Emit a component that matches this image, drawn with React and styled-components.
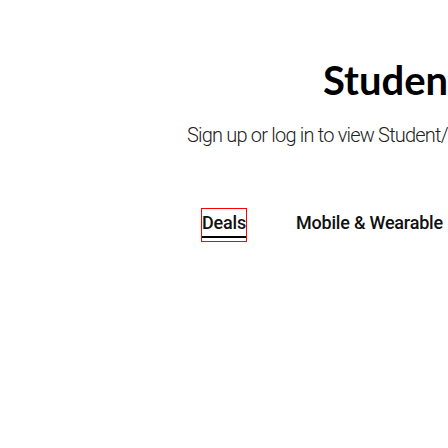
import React from "react";
import styled, { createGlobalStyle } from "styled-components";

const Global = createGlobalStyle`
  html, body { margin: 0; padding: 0; background: #fff; }
  body { overflow: hidden; width: 448px; height: 448px; }
`;

const Page = styled.main`
  width: 448px;
  height: 448px;
  overflow: hidden;
  display: flex;
  flex-direction: column;
  padding-top: 56px;
  box-sizing: border-box;
`;

const Row = styled.div`
  padding-left: ${(p) => p.$indent}px;
  white-space: nowrap;
`;

const Title = styled.h1`
  margin: 0;
  font-family: "Lato", "Liberation Sans", sans-serif;
  font-weight: 700;
  font-size: 40px;
  line-height: 48px;
  color: #000;
  letter-spacing: 0;
`;

const Subtitle = styled.p`
  margin: 17px 0 0;
  font-family: Roboto, "Liberation Sans", sans-serif;
  font-weight: 300;
  font-size: 20px;
  line-height: 28px;
  color: #222;
  letter-spacing: -0.8px;
`;

const Tabs = styled.nav`
  margin-top: 59px;
  display: flex;
  align-items: flex-start;
  gap: 48px;
`;

const Tab = styled.div`
  display: flex;
  flex-direction: column;
  border: 1px solid ${(p) => (p.$focused ? "#ff0000" : "transparent")};
  padding: 0 0 3px;
`;

const TabLabel = styled.span`
  font-family: Roboto, "Liberation Sans", sans-serif;
  font-weight: 500;
  font-size: 18px;
  line-height: 27px;
  color: #111;
  letter-spacing: -0.2px;
`;

const Underline = styled.span`
  height: 2px;
  background: ${(p) => (p.$active ? "#000" : "transparent")};
`;

export default function App() {
  return (
    <>
      <Global />
      <Page>
        <Row $indent={323}>
          <Title>Student Offers</Title>
        </Row>
        <Row $indent={187}>
          <Subtitle>Sign up or log in to view Student/Education offers</Subtitle>
        </Row>
        <Row $indent={201}>
          <Tabs>
            <Tab $focused>
              <TabLabel>Deals</TabLabel>
              <Underline $active />
            </Tab>
            <Tab>
              <TabLabel>Mobile &amp; Wearable</TabLabel>
              <Underline />
            </Tab>
          </Tabs>
        </Row>
      </Page>
    </>
  );
}
